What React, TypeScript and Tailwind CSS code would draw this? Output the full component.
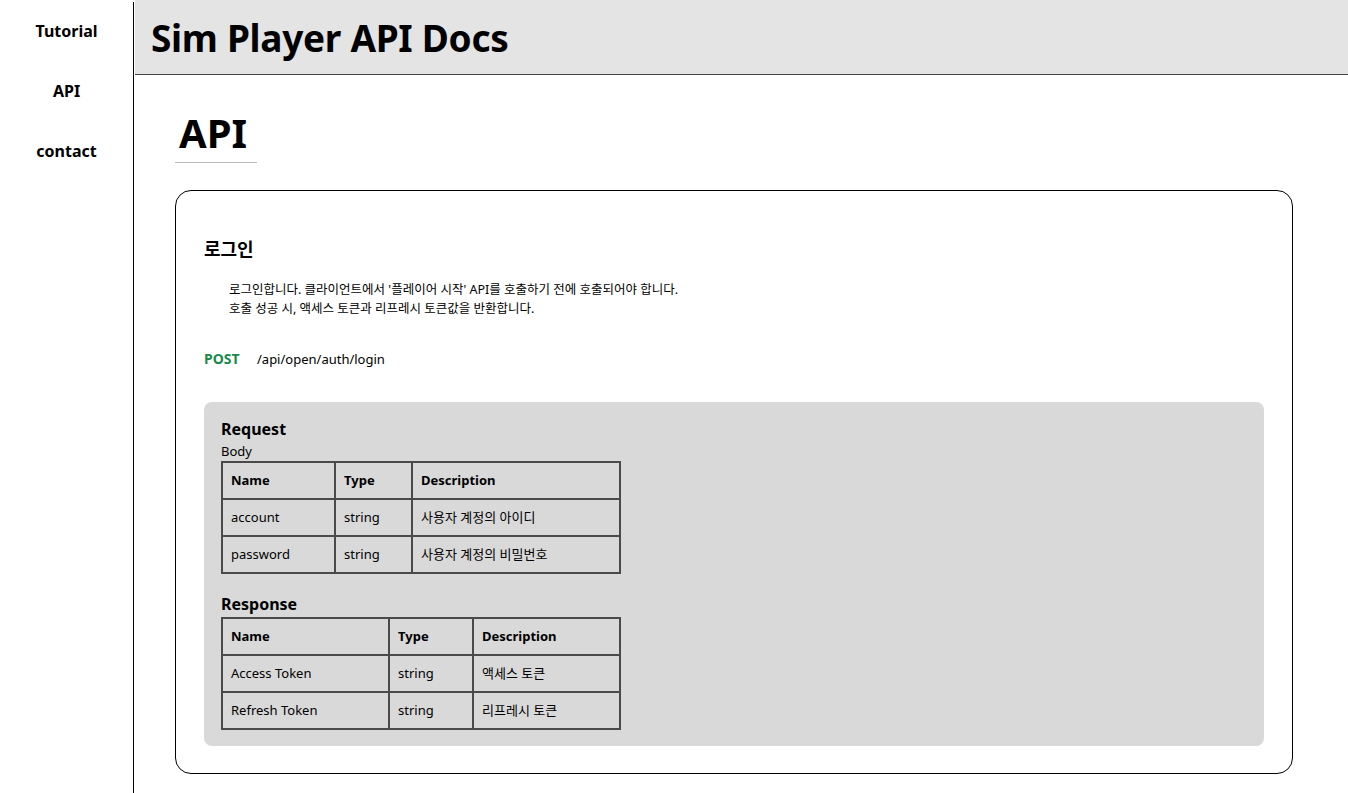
import React from "react";

const font = { fontFamily: '"Noto Sans", "Noto Sans CJK KR", sans-serif' };

function Table({ cols, rows }: { cols: number[]; rows: string[][] }) {
  return (
    <table className="border-collapse border-2 border-[#4a4a4a] text-[13px] table-fixed" style={{ width: cols.reduce((a, b) => a + b, 0) }}>
      <colgroup>
        {cols.map((w, i) => (
          <col key={i} style={{ width: w }} />
        ))}
      </colgroup>
      <thead>
        <tr className="h-[37px]">
          {["Name", "Type", "Description"].map((h) => (
            <th key={h} className="border-2 border-[#4a4a4a] text-left font-bold pl-[8px] py-0">
              {h}
            </th>
          ))}
        </tr>
      </thead>
      <tbody>
        {rows.map((r, i) => (
          <tr key={i} className="h-[37px]">
            {r.map((c, j) => (
              <td key={j} className="border-2 border-[#4a4a4a] pl-[8px] py-0">
                {c}
              </td>
            ))}
          </tr>
        ))}
      </tbody>
    </table>
  );
}

export default function App() {
  return (
    <div className="flex min-h-[793px] bg-white text-black" style={font}>
      <aside className="w-[134px] shrink-0 mt-[2px] border-r border-black flex flex-col items-center pt-[17px] gap-[36px] text-[16px] font-bold">
        <a className="leading-[24px]">Tutorial</a>
        <a className="leading-[24px]">API</a>
        <a className="leading-[24px]">contact</a>
      </aside>
      <main className="flex-1 min-w-0">
        <header className="h-[75px] ml-[1px] bg-[#e4e4e4] border-b border-[#444] flex items-center pl-[16px]">
          <h1 className="text-[37px] font-bold leading-none tracking-[-0.3px]">Sim Player API Docs</h1>
        </header>
        <div className="pl-[41px] pr-[55px] pt-[30px] pb-[20px]">
          <h2 className="inline-block text-[40px] font-bold leading-[56px] pl-[4px] pr-[10px] border-b border-[#bbb] pb-[1px]">API</h2>
          <section className="mt-[27px] border border-black rounded-[16px] pt-[46px] px-[28px] pb-[27px]">
            <h3 className="text-[18px] font-bold leading-[24px]">로그인</h3>
            <div className="mt-[19px] pl-[25px] text-[12.5px] leading-[19px]">
              <p>로그인합니다. 클라이언트에서 '플레이어 시작' API를 호출하기 전에 호출되어야 합니다.</p>
              <p>호출 성공 시, 액세스 토큰과 리프레시 토큰값을 반환합니다.</p>
            </div>
            <div className="mt-[31px] flex items-center text-[14px] leading-[20px]">
              <span className="font-bold text-[#1a8a4a] w-[53px]">POST</span>
              <span className="text-[13px]">/api/open/auth/login</span>
            </div>
            <div className="mt-[33px] bg-[#d9d9d9] rounded-[8px] px-[17px] pt-[16px] pb-[16px]">
              <h4 className="text-[16px] font-bold leading-[22px]">Request</h4>
              <div className="mt-[2px] text-[13px] leading-[19px]">Body</div>
              <Table
                cols={[113, 77, 208]}
                rows={[
                  ["account", "string", "사용자 계정의 아이디"],
                  ["password", "string", "사용자 계정의 비밀번호"],
                ]}
              />
              <h4 className="mt-[19px] mb-[2px] text-[16px] font-bold leading-[22px]">Response</h4>
              <Table
                cols={[167, 84, 147]}
                rows={[
                  ["Access Token", "string", "액세스 토큰"],
                  ["Refresh Token", "string", "리프레시 토큰"],
                ]}
              />
            </div>
          </section>
        </div>
      </main>
    </div>
  );
}
